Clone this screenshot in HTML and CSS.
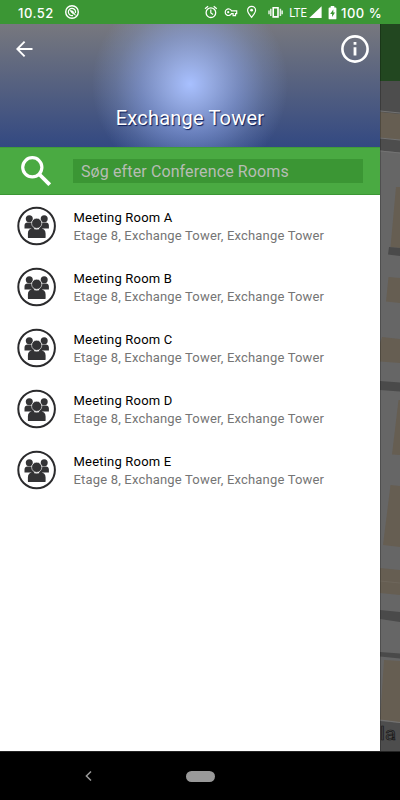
FILE: index.html
```html
<!DOCTYPE html>
<html lang="da">
<head>
<meta charset="utf-8">
<title>Exchange Tower</title>
<link rel="stylesheet" href="styles.css">
</head>
<body>
<svg width="0" height="0" class="defs">
  <symbol id="people" viewBox="0 0 40 40">
    <circle cx="19.600" cy="20" r="18.300" fill="#fff" stroke="#2b2b2d" stroke-width="2"/>
    <g fill="#333335">
      <circle cx="12.3" cy="12.8" r="3.5"/>
      <circle cx="27.2" cy="12.8" r="3.5"/>
      <path d="M7.500 22.600v-3.100c0-2 1.200-3 3-3h4l3 6.100-2 1.100-1.500-1.100zM31.900 22.600v-3.100c0-2-1.200-3-3-3h-4l-3 6.100 2 1.100 1.500-1.100z"/>
      <circle cx="19.700" cy="17.300" r="5.100" stroke="#fff" stroke-width=".6"/>
      <path d="M10.900 31.200v-3.800c0-3.200 1.800-5 4.800-5 2.400 1.300 5.600 1.300 8 0 2.900 0 4.900 1.800 4.900 5v3.800q0 .9-.9.900H11.800q-.9 0-.9-.9z"/>
    </g>
  </symbol>
</svg>
<header class="status">
  <span class="clock">10.52</span>
  <svg class="app" width="14" height="14" viewBox="0 0 14 14" fill="none" stroke="#fff">
    <circle cx="7" cy="7" r="6.300" stroke-width="1.400"/>
    <path d="M8 10.400A3.600 3.600 0 1 1 10.400 8" stroke-width="1.200"/>
    <path d="M4.800 5.300 7.800 6l2.800 4.300-3.800-2.400z" fill="#fff" stroke-width=".6"/>
  </svg>
  <svg class="tray" width="123" height="24" viewBox="203 0 123 24" fill="none" stroke="#fff">
    <circle cx="210.9" cy="12.7" r="4.8" stroke-width="1.3"/>
    <path d="M210.800 9.500v3.500l2.300 1.500M205 8.800l3.100-2.600M216.800 8.800l-3.100-2.600" stroke-width="1.2"/>
    <path d="M231.500 10.800a3.300 3.300 0 1 0 0 2.800h1.600v2h2.400v-2h1.200v-2.800z" stroke-width="1.2"/>
    <circle cx="228.2" cy="12.2" r="1.1" fill="#fff" stroke="none"/>
    <path d="M251.600 17.400c-2.500-3-4-5.200-4-7.100a4 4 0 0 1 8 0c0 1.900-1.500 4.100-4 7.100z" stroke-width="1.2"/>
    <circle cx="251.6" cy="10.2" r="1.4" fill="#fff" stroke="none"/>
    <path d="M273.200 7.700h4.800v9.200h-4.800z" stroke-width="1.6"/>
    <path d="M270.800 8.700v7.400M280.400 8.700v7.400M269 10.500v3.800M282.200 10.500v3.800" stroke-width="1.5" opacity=".85"/>
    <path d="M321.600 6.200V18h-12.400z" fill="#fff" stroke="none"/>
    <text x="289.3" y="17" class="lte" textLength="17.500" lengthAdjust="spacingAndGlyphs">LTE</text>
  </svg>
  <svg class="battery" width="9" height="14" viewBox="0 0 9 14">
    <path d="M2.700 0h3.600v1.500h1.200q.9 0 .9.900v10q0 .9-.9.900h-6q-.9 0-.9-.9v-10q0-.9.900-.9h1.200z" fill="#fff"/>
    <path d="M5.300 3.600 2.200 8h1.900v3l2.900-4.400H5.300z" fill="#3b9634"/>
  </svg>
  <span class="percent">100 %</span>
</header>
<main class="screen">
  <section class="drawer">
    <div class="hero">
      <div class="bar">
        <svg width="17" height="16" viewBox="0 0 17 16" fill="none" stroke="#fff" stroke-width="1.9"><path d="M16.500 8H1.500M8.600.7 1.300 8l7.300 7.300"/></svg>
        <svg width="28" height="28" viewBox="0 0 28 28" fill="none" stroke="#fff"><circle cx="14" cy="14" r="12.600" stroke-width="2.600"/><path d="M14 12.200v8.300M14 7v2.700" stroke-width="2.800"/></svg>
      </div>
      <h1>Exchange Tower</h1>
    </div>
    <div class="search">
      <svg width="30" height="30" viewBox="0 0 30 30" fill="none" stroke="#fff"><circle cx="11.300" cy="11.300" r="9.600" stroke-width="3.200"/><path d="M18 18l10.700 10.700" stroke-width="3.800"/></svg>
      <div class="field">Søg efter Conference Rooms</div>
    </div>
    <ul class="rooms">
      <li><svg class="icon"><use href="#people"/></svg><div><b>Meeting Room A</b><span>Etage 8, Exchange Tower, Exchange Tower</span></div></li>
      <li><svg class="icon"><use href="#people"/></svg><div><b>Meeting Room B</b><span>Etage 8, Exchange Tower, Exchange Tower</span></div></li>
      <li><svg class="icon"><use href="#people"/></svg><div><b>Meeting Room C</b><span>Etage 8, Exchange Tower, Exchange Tower</span></div></li>
      <li><svg class="icon"><use href="#people"/></svg><div><b>Meeting Room D</b><span>Etage 8, Exchange Tower, Exchange Tower</span></div></li>
      <li><svg class="icon"><use href="#people"/></svg><div><b>Meeting Room E</b><span>Etage 8, Exchange Tower, Exchange Tower</span></div></li>
    </ul>
  </section>
  <svg class="map" width="20" height="727" viewBox="380 24 20 727">
    <path fill="#666" d="M380 24h20v727h-20z"/>
    <path fill="#4d4d4d" d="M380 81h20v71.500l-20-2z"/>
    <path fill="#665e52" d="M380 112l20 2v26l-20-2.500z"/>
    <path d="M380 111l20 2M380 138l20 2M380 151l20 2" stroke="#737373"/>
    <path fill="#665e52" d="M396 187h4v61l-9.500-1zM388.500 277l11.500 1v25l-14-1.500zM382 337l18 2v24l-20-1.500V343zM398.500 400h1.500v55l-8-.5zM390.500 485l9.500 1v61l-17-2zM380 568l20 2v25l-20-2zM384 660l16 1v62l-20-3z"/>
    <path fill="#4a4a4a" d="M389 247l11 1v8l-12-1.500zM380 381l20 1.500v9l-20-1.500zM380 610l20 2v10l-20-3zM380 652l20 1.500v5l-20-2z"/>
    <path d="M380 581l20 2" stroke="#716a60" stroke-width=".7"/>
    <path fill="#4d4d4d" d="M380 721l20 2v28h-20z"/>
    <path d="M380 720l20 2.500" stroke="#737373"/>
    <path fill="#224720" d="M380 24h20v57h-20z"/>
    <text x="380" y="739.500" class="mark" textLength="16" lengthAdjust="spacingAndGlyphs">la</text>
    <path d="M380.500 24v727" stroke="#000" opacity=".22"/>
  </svg>
</main>
<footer class="nav">
  <svg width="7" height="10" viewBox="0 0 7 10" fill="none" stroke="#999" stroke-width="1.500"><path d="M6 .5 1.400 5 6 9.500"/></svg>
  <span class="home"></span>
</footer>
</body>
</html>
```
FILE: styles.css
```css
* { box-sizing: border-box; }
body {
  margin: 0;
  width: 400px;
  height: 800px;
  display: flex;
  flex-direction: column;
  overflow: hidden;
  background: #000;
  font-family: Roboto, "Liberation Sans", sans-serif;
}
svg { display: block; flex: none; }
.defs { display: none; }
.status {
  height: 24px;
  flex: none;
  display: flex;
  align-items: center;
  padding-left: 18px;
  background: #3b9634;
  color: #fff;
  font: 500 13px/24px Inter, Roboto, sans-serif;
  white-space: nowrap;
}
.clock { width: 47px; padding-top: 2px; letter-spacing: 0.5px; }
.tray { margin-left: 124px; }
.lte { font: 400 12px Roboto, sans-serif; fill: #fff; stroke: none; }
.battery { margin: 1px 0 0 2px; }
.percent { margin-left: 4px; padding-top: 2px; letter-spacing: 0.5px; }
.screen { height: 727px; flex: none; display: flex; }
.drawer { width: 380px; flex: none; background: #fff; }
.hero {
  height: 123px;
  display: flex;
  flex-direction: column;
  justify-content: space-between;
  background:
    radial-gradient(circle 98px at 190px 60px, rgb(168, 192, 255), rgba(168, 192, 255, 0.76) 22%, rgba(150, 176, 245, 0.52) 50%, rgba(140, 165, 225, 0.25) 76%, rgba(135, 160, 210, 0)),
    linear-gradient(#77787e, #334982);
}
.bar { display: flex; justify-content: space-between; align-items: center; padding: 11px 11px 0 16px; }
h1 {
  margin: 0 0 17px;
  font-size: 20px;
  font-weight: 400;
  line-height: 24px;
  letter-spacing: 0.2px;
  text-align: center;
  color: #fff;
  text-shadow: 1px 1px 1px #0a1c58;
}
.search {
  height: 48px;
  display: flex;
  align-items: center;
  padding: 0 17px 0 21px;
  gap: 22px;
  background: #4aaa42;
  border-top: 1px solid #409c39;
  border-bottom: 1px solid #3b9634;
}
.field {
  flex: 1;
  height: 24px;
  padding-left: 8px;
  background: #3b9634;
  color: #b7bdb4;
  font-size: 16px;
  line-height: 25px;
  letter-spacing: 0.12px;
}
.rooms { margin: 0; padding: 0; list-style: none; }
.rooms li { height: 61px; display: flex; align-items: center; gap: 16.5px; padding-left: 17px; }
.icon { width: 40px; height: 40px; }
.rooms b, .rooms span { display: block; font-size: 13px; font-weight: 400; line-height: 18px; }
.rooms b { color: #000; letter-spacing: 0.2px; }
.rooms span { color: #757575; letter-spacing: 0.18px; }
.rooms li div { padding-top: 2px; }
.mark { font: 19px Roboto, sans-serif; fill: #4d4d4d; stroke: #181818; stroke-width: 0.7px; }
.nav { height: 49px; display: flex; align-items: center; padding: 0 0 0 85px; border-top: 1px solid #242424; }
.home { width: 29px; height: 11px; margin-left: 94px; border-radius: 6px; background: #999; }
```
